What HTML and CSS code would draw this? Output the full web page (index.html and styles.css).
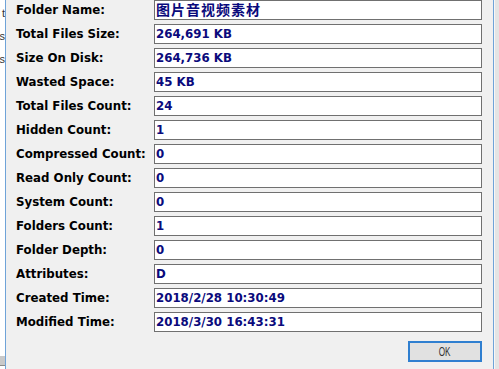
FILE: index.html
```html
<!DOCTYPE html>
<html>
<head>
<meta charset="utf-8">
<link rel="stylesheet" href="styles.css">
</head>
<body>
<div class="screen">
  <div class="behind">
    <div class="behind-text"><span>t</span><span>s</span><span>s</span></div>
    <div class="behind-bar"></div>
  </div>
  <div class="edge"></div>
  <div class="dialog">
    <div class="grid">
      <div class="label">Folder Name:</div><div class="field cjk">图片音视频素材</div>
      <div class="label">Total Files Size:</div><div class="field">264,691 KB</div>
      <div class="label">Size On Disk:</div><div class="field">264,736 KB</div>
      <div class="label">Wasted Space:</div><div class="field">45 KB</div>
      <div class="label">Total Files Count:</div><div class="field">24</div>
      <div class="label">Hidden Count:</div><div class="field">1</div>
      <div class="label">Compressed Count:</div><div class="field">0</div>
      <div class="label">Read Only Count:</div><div class="field">0</div>
      <div class="label">System Count:</div><div class="field">0</div>
      <div class="label">Folders Count:</div><div class="field">1</div>
      <div class="label">Folder Depth:</div><div class="field">0</div>
      <div class="label">Attributes:</div><div class="field">D</div>
      <div class="label">Created Time:</div><div class="field">2018/2/28 10:30:49</div>
      <div class="label">Modified Time:</div><div class="field">2018/3/30 16:43:31</div>
    </div>
    <div class="actions">
      <button class="ok"><span>OK</span></button>
    </div>
  </div>
  <div class="edge"></div>
  <div class="right-strip"></div>
</div>
</body>
</html>
```
FILE: styles.css
```css
html, body {
  margin: 0;
  padding: 0;
  background: #f0f0f0;
}
.screen {
  width: 499px;
  height: 369px;
  display: flex;
  overflow: hidden;
}
.behind {
  width: 5px;
  background: #ffffff;
  display: flex;
  flex-direction: column;
  justify-content: space-between;
  overflow: hidden;
}
.behind-text {
  display: flex;
  flex-direction: column;
  align-items: flex-end;
  padding-top: 2px;
  font-family: "Liberation Sans", sans-serif;
  font-size: 11px;
  line-height: 23px;
  color: #333;
}
.behind-text span {
  display: block;
}
.behind-bar {
  height: 9px;
  margin-bottom: 3px;
  background: #c9c9c9;
  border-bottom: 1px solid #8a8a8a;
}
.edge {
  width: 1px;
  background: #6fa3d8;
}
.right-strip {
  width: 5px;
  background: #e4e4e4;
  border-left: 1px solid #f7f7f7;
  box-sizing: border-box;
}
.dialog {
  width: 487px;
  padding: 0 11px 0 10px;
  box-sizing: border-box;
  background: #f0f0f0;
  display: flex;
  flex-direction: column;
}
.grid {
  display: grid;
  grid-template-columns: 138px 328px;
  grid-auto-rows: 20px;
  row-gap: 4px;
  font-family: "DejaVu Sans", sans-serif;
  font-weight: bold;
  font-size: 11.8px;
}
.label {
  color: #000;
  line-height: 20px;
  white-space: nowrap;
}
.field {
  background: #fff;
  border: 1px solid #707070;
  box-sizing: border-box;
  padding-left: 1px;
  line-height: 18px;
  color: #0a0a7c;
  white-space: nowrap;
  overflow: hidden;
}
.field.cjk {
  font-family: "Noto Sans CJK SC", sans-serif;
  font-size: 14px;
  letter-spacing: 1px;
  line-height: 17px;
}
.actions {
  display: flex;
  justify-content: flex-end;
  padding-top: 9px;
}
.ok {
  width: 74px;
  height: 21px;
  margin: 0;
  padding: 0;
  background: #e1e1e1;
  border: 2px solid #2f7fd0;
  box-sizing: border-box;
  font-family: "Liberation Sans", sans-serif;
  font-size: 12px;
  color: #333;
  display: flex;
  align-items: center;
  justify-content: center;
}
.ok span {
  display: inline-block;
  transform: scaleX(0.68);
}
```
